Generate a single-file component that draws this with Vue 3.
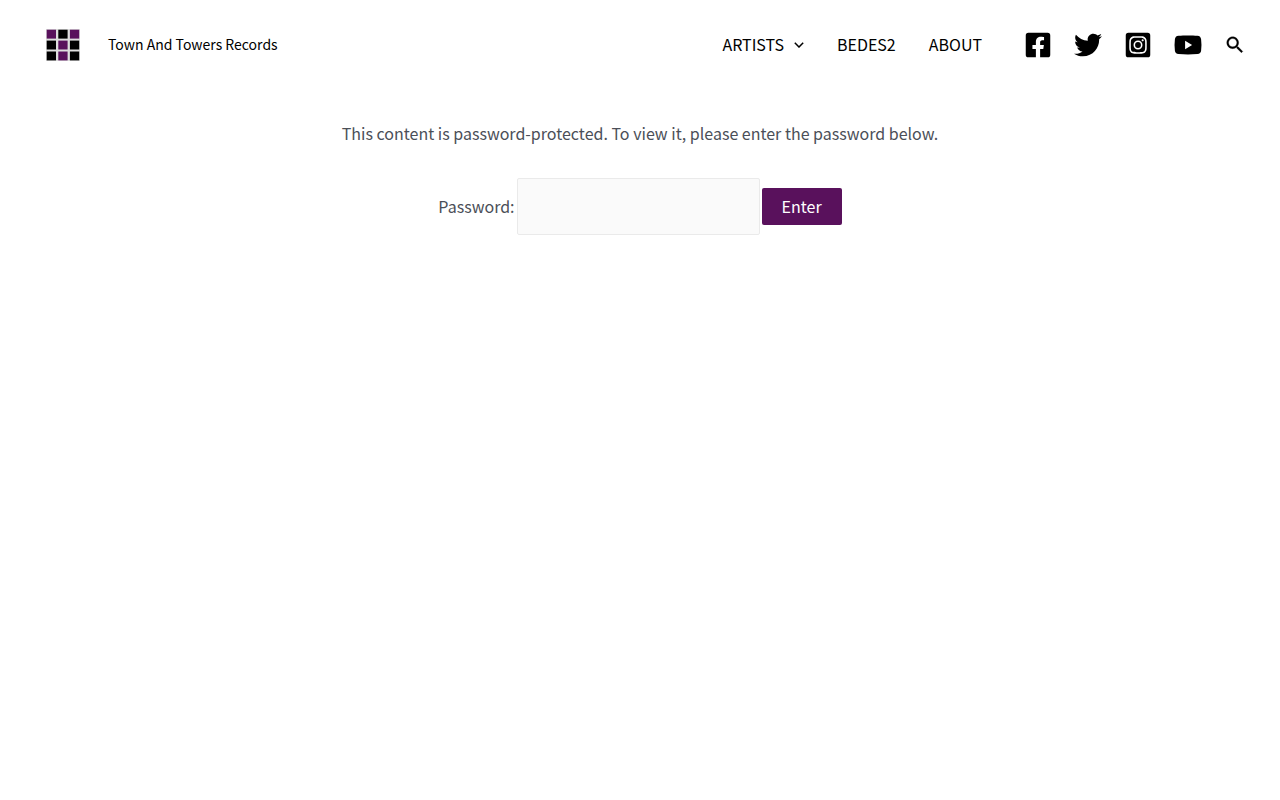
<template>
  <header class="site-header">
    <a class="brand" href="#">
      <svg class="logo" viewBox="0 0 34 32" aria-hidden="true">
        <rect width="34" height="32" fill="#dedede" />
        <rect
          v-for="(tile, i) in tiles"
          :key="i"
          :x="0.7 + (i % 3) * 11.6"
          :y="0.7 + Math.floor(i / 3) * 10.9"
          width="9.3"
          height="8.9"
          :fill="tile ? '#59115c' : '#000'"
        />
      </svg>
      <span class="site-title">Town And Towers Records</span>
    </a>

    <div class="header-right">
      <nav class="menu">
        <a v-for="item in menu" :key="item.label" href="#">
          <span>{{ item.label }}</span>
          <svg v-if="item.children" class="chevron" viewBox="0 0 10 6" aria-hidden="true">
            <path d="M.8.8 5 5 9.2.8" fill="none" stroke="currentColor" stroke-width="1.5" />
          </svg>
        </a>
      </nav>

      <div class="social">
        <a v-for="icon in social" :key="icon.name" href="#" :aria-label="icon.name">
          <svg :viewBox="icon.viewBox"><path :d="icon.path" /></svg>
        </a>
      </div>

      <button class="search" type="button" aria-label="Search">
        <svg viewBox="0 0 24 24">
          <path d="M15.5 14h-.79l-.28-.27C15.41 12.59 16 11.11 16 9.5 16 5.91 13.09 3 9.5 3S3 5.91 3 9.5 5.91 16 9.5 16c1.61 0 3.09-.59 4.23-1.57l.27.28v.79l5 4.99L20.49 19l-4.99-5zm-6 0C7.01 14 5 11.99 5 9.5S7.01 5 9.5 5 14 7.01 14 9.5 11.99 14 9.5 14z" />
        </svg>
      </button>
    </div>
  </header>

  <main class="content">
    <p>This content is password-protected. To view it, please enter the password below.</p>
    <form class="password-form" @submit.prevent>
      <label for="post-password">Password:</label>
      <input id="post-password" v-model="password" type="password" />
      <button type="submit">Enter</button>
    </form>
  </main>
</template>

<script setup>
import { ref } from 'vue'

const password = ref('')

// 1 = purple, 0 = black
const tiles = [1, 0, 1, 0, 1, 0, 0, 1, 0]

const menu = [
  { label: 'ARTISTS', children: true },
  { label: 'BEDES2' },
  { label: 'ABOUT' }
]

const social = [
  {
    name: 'Facebook',
    viewBox: '0 0 448 512',
    path: 'M400 32H48A48 48 0 0 0 0 80v352a48 48 0 0 0 48 48h137.25V327.69h-63V256h63v-54.64c0-62.15 37-96.48 93.67-96.48 27.14 0 55.52 4.84 55.52 4.84v61h-31.27c-30.81 0-40.42 19.12-40.42 38.73V256h68.78l-11 71.69h-57.78V480H400a48 48 0 0 0 48-48V80a48 48 0 0 0-48-48z'
  },
  {
    name: 'Twitter',
    viewBox: '0 0 512 512',
    path: 'M459.37 151.716c.325 4.548.325 9.097.325 13.645 0 138.72-105.583 298.558-298.558 298.558-59.452 0-114.68-17.219-161.137-47.106 8.447.974 16.568 1.299 25.34 1.299 49.055 0 94.213-16.568 130.274-44.832-46.132-.975-84.792-31.188-98.112-72.772 6.498.974 12.995 1.624 19.818 1.624 9.421 0 18.843-1.3 27.614-3.573-48.081-9.747-84.143-51.98-84.143-102.985v-1.299c13.969 7.797 30.214 12.67 47.431 13.319-28.264-18.843-46.781-51.005-46.781-87.391 0-19.492 5.197-37.36 14.294-52.954 51.655 63.675 129.3 105.258 216.365 109.807-1.624-7.797-2.599-15.918-2.599-24.04 0-57.828 46.782-104.934 104.934-104.934 30.213 0 57.502 12.67 76.67 33.137 23.715-4.548 46.456-13.32 66.599-25.34-7.798 24.366-24.366 44.833-46.132 57.827 21.117-2.273 41.584-8.122 60.426-16.243-14.292 20.791-32.161 39.308-52.628 54.253z'
  },
  {
    name: 'Instagram',
    viewBox: '0 0 448 512',
    path: 'M224 202.66A53.34 53.34 0 1 0 277.36 256 53.38 53.38 0 0 0 224 202.66Zm124.71-41a54 54 0 0 0-30.41-30.41c-21-8.29-71-6.43-94.3-6.43s-73.25-1.93-94.31 6.43a54 54 0 0 0-30.41 30.41c-8.28 21-6.43 71.05-6.43 94.33S91 329.26 99.32 350.33a54 54 0 0 0 30.41 30.41c21 8.29 71 6.43 94.31 6.43s73.24 1.93 94.3-6.43a54 54 0 0 0 30.41-30.41c8.35-21 6.43-71.05 6.43-94.33S357.1 182.74 348.75 161.67ZM224 338a82 82 0 1 1 82-82A81.9 81.9 0 0 1 224 338Zm85.38-148.3a19.14 19.14 0 1 1 19.13-19.14A19.1 19.1 0 0 1 309.42 189.74ZM400 32H48A48 48 0 0 0 0 80V432a48 48 0 0 0 48 48H400a48 48 0 0 0 48-48V80A48 48 0 0 0 400 32ZM382.88 322c-1.29 25.63-7.14 48.34-25.85 67s-41.4 24.63-67 25.85c-26.41 1.49-105.59 1.49-132 0-25.63-1.29-48.26-7.15-67-25.85s-24.63-41.42-25.85-67c-1.49-26.42-1.49-105.61 0-132 1.29-25.63 7.07-48.34 25.85-67s41.47-24.56 67-25.78c26.41-1.49 105.59-1.49 132 0 25.63 1.29 48.33 7.15 67 25.85s24.63 41.42 25.85 67.05C384.37 216.44 384.37 295.56 382.88 322Z'
  },
  {
    name: 'YouTube',
    viewBox: '0 0 28 28',
    path: 'M14 4.4c3.8 0 6.6.1 9.4.3 2.4.2 3.4 1.5 3.7 3.5.5 3.9.5 7.7 0 11.6-.3 2-1.3 3.1-3.7 3.3-6.3.4-12.5.4-18.8 0-2.4-.2-3.4-1.3-3.7-3.3-.5-3.9-.5-7.7 0-11.6.3-2 1.3-3.3 3.7-3.5 2.8-.2 5.6-.3 9.4-.3zM11.1 9.8v8.4l7-4.2z'
  }
]
</script>

<style>
body {
  margin: 0;
  background: #fff;
}
</style>

<style scoped>
.site-header,
.content {
  font-family: "Noto Sans CJK SC", "Noto Sans", sans-serif;
}

.site-header {
  display: flex;
  align-items: center;
  justify-content: space-between;
  min-height: 90px;
  padding: 0 34px 0 46px;
  color: #000;
}

.site-header a {
  color: inherit;
  text-decoration: none;
}

.brand {
  display: flex;
  align-items: center;
  gap: 28px;
}

.logo {
  width: 34px;
  height: 32px;
}

.site-title {
  padding-bottom: 2px;
  font-size: 14px;
  line-height: 24px;
}

.header-right {
  display: flex;
  align-items: center;
}

.menu {
  display: flex;
  gap: 33px;
  margin-right: 42px;
  font-size: 16px;
  line-height: 24px;
}

.menu a {
  display: flex;
  align-items: center;
  gap: 10px;
}

.menu span {
  padding-bottom: 2px;
}

.chevron {
  width: 10px;
  height: 6px;
}

.social {
  display: flex;
  gap: 22px;
  margin-right: 22px;
}

.social svg {
  display: block;
  width: 28px;
  height: 28px;
}

.search {
  padding: 0;
  border: 0;
  background: none;
  cursor: pointer;
}

.search svg {
  display: block;
  width: 22px;
  height: 22px;
  stroke: #000;
  stroke-width: 0.3;
}

.content {
  padding: 30px 20px;
  color: #4b4f58;
  font-size: 16px;
  line-height: 26px;
  text-align: center;
}

.content p {
  margin: 0 0 32px;
}

.password-form {
  display: flex;
  align-items: center;
  justify-content: center;
  gap: 2px;
}

.password-form label {
  padding-bottom: 2px;
}

.password-form input {
  box-sizing: border-box;
  width: 243px;
  height: 57px;
  padding: 12px;
  border: 1px solid #eaeaea;
  border-radius: 2px;
  background: #fafafa;
  color: #666;
  font: inherit;
}

.password-form button {
  height: 37px;
  padding: 0 20px 2px;
  border: 0;
  border-radius: 2px;
  background: #59115c;
  color: #fff;
  font: inherit;
  cursor: pointer;
}
</style>
